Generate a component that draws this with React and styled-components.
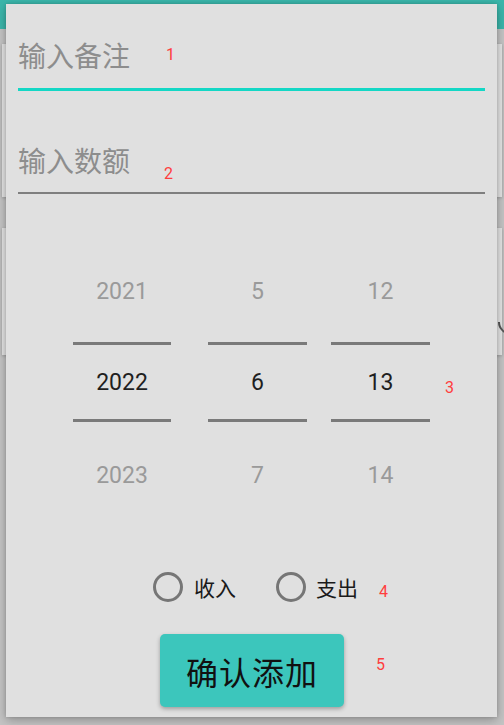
import React from 'react';
import styled, { createGlobalStyle } from 'styled-components';

const GlobalStyle = createGlobalStyle`
  html, body {
    margin: 0;
    padding: 0;
  }
  body {
    width: 504px;
    height: 725px;
    overflow: hidden;
    background: #c4c4c4;
    font-family: Roboto, "Noto Sans CJK SC", sans-serif;
  }
`;

const CJK = `"Noto Sans CJK SC", "Noto Sans", sans-serif`;

const Screen = styled.div`
  position: relative;
  width: 504px;
  height: 725px;
  background: #c4c4c4;
  overflow: hidden;
`;

const AppBar = styled.div`
  height: 29px;
  background: #3bb6ab;
`;

const CardList = styled.div`
  display: flex;
  flex-direction: column;
  gap: 31px;
  padding: 15px 2px 0;
`;

const Card = styled.div`
  height: ${p => p.h}px;
  background: #e5e5e5;
  box-shadow: 0 1px 3px rgba(0, 0, 0, 0.2);
  display: flex;
  justify-content: flex-end;
  align-items: flex-start;
`;

// radio of the list row behind the dialog, only its lower-left arc peeks out
const PeekRadio = styled.div`
  width: 26px;
  height: 26px;
  box-sizing: border-box;
  margin: 81px -22px 0 0;
  border: 2px solid transparent;
  border-left-color: #555;
  border-bottom-color: #555;
  border-radius: 50%;
  transform: rotate(-45deg);
`;

const Dialog = styled.div`
  position: absolute;
  left: 6px;
  top: 4px;
  width: 491px;
  height: 713px;
  box-sizing: border-box;
  padding: 0 12px;
  background: #e0e0e0;
  box-shadow: 0 3px 10px rgba(0, 0, 0, 0.28), 0 0 3px rgba(0, 0, 0, 0.15);
  display: flex;
  flex-direction: column;
`;

const Field = styled.div`
  display: flex;
  align-items: center;
  height: 34px;
  margin-top: ${p => p.top}px;
  padding-bottom: ${p => (p.focused ? 16 : 15)}px;
  border-bottom: ${p => (p.focused ? '3px solid #14d7c5' : '2px solid #7f7f7f')};
`;

const Hint = styled.span`
  font-family: ${CJK};
  font-size: 28px;
  line-height: 34px;
  color: #8d8d8d;
`;

const Marker = styled.span`
  font-family: Roboto, sans-serif;
  font-size: 16px;
  line-height: 16px;
  color: #ff3d3d;
  margin-left: ${p => p.left}px;
  margin-top: ${p => p.dy || 0}px;
  margin-bottom: ${p => p.up || 0}px;
  align-self: ${p => p.self || 'auto'};
`;

const PickerRow = styled.div`
  display: flex;
  margin-top: 46px;
  padding-left: 55px;
`;

const Column = styled.div`
  display: flex;
  flex-direction: column;
  width: ${p => p.w}px;
  margin-left: ${p => p.left || 0}px;
`;

const Cell = styled.div`
  height: ${p => p.h}px;
  display: flex;
  align-items: center;
  justify-content: center;
  font-family: Roboto, sans-serif;
  font-size: 23px;
  color: #9a9a9a;
`;

const SelectedCell = styled(Cell)`
  height: 74px;
  color: #1f1f1f;
  border-top: 3px solid #7a7a7a;
  border-bottom: 3px solid #7a7a7a;
`;

const RadioRow = styled.div`
  display: flex;
  align-items: center;
  height: 36px;
  margin-top: 41px;
  padding-left: 135px;
`;

const RadioItem = styled.label`
  display: flex;
  align-items: center;
  margin-left: ${p => p.left || 0}px;
`;

const RadioCircle = styled.span`
  width: 30px;
  height: 30px;
  box-sizing: border-box;
  border: 3px solid #767676;
  border-radius: 50%;
`;

const RadioLabel = styled.span`
  margin-left: ${p => p.gap}px;
  font-family: ${CJK};
  font-size: 21px;
  line-height: 30px;
  color: #1a1a1a;
`;

const ButtonRow = styled.div`
  display: flex;
  align-items: center;
  margin-top: 29px;
  padding-left: 142px;
`;

const ConfirmButton = styled.button`
  width: 184px;
  height: 73px;
  border: none;
  border-radius: 5px;
  background: #3cc6bc;
  box-shadow: 0 2px 4px rgba(0, 0, 0, 0.3);
  font-family: ${CJK};
  font-size: 32px;
  letter-spacing: 1px;
  color: #111;
  padding: 0;
`;

const columns = [
  { w: 98, left: 0, values: ['2021', '2022', '2023'] },
  { w: 99, left: 37, values: ['5', '6', '7'] },
  { w: 99, left: 24, values: ['12', '13', '14'] },
];

export default function App() {
  return (
    <Screen>
      <GlobalStyle />
      <AppBar />
      <CardList>
        <Card h={153} />
        <Card h={127}>
          <PeekRadio />
        </Card>
      </CardList>

      <Dialog>
        <Field top={34} focused>
          <Hint>输入备注</Hint>
          <Marker left={36}>1</Marker>
        </Field>
        <Field top={52}>
          <Hint>输入数额</Hint>
          <Marker left={34} dy={27}>2</Marker>
        </Field>

        <PickerRow>
          {columns.map(col => (
            <Column key={col.values[1]} w={col.w} left={col.left}>
              <Cell h={102}>{col.values[0]}</Cell>
              <SelectedCell>{col.values[1]}</SelectedCell>
              <Cell h={106}>{col.values[2]}</Cell>
            </Column>
          ))}
          <Marker left={15} dy={140} self="flex-start">3</Marker>
        </PickerRow>

        <RadioRow>
          <RadioItem>
            <RadioCircle />
            <RadioLabel gap={11}>收入</RadioLabel>
          </RadioItem>
          <RadioItem left={40}>
            <RadioCircle />
            <RadioLabel gap={10}>支出</RadioLabel>
          </RadioItem>
          <Marker left={21} dy={9}>4</Marker>
        </RadioRow>

        <ButtonRow>
          <ConfirmButton>确认添加</ConfirmButton>
          <Marker left={32} up={11}>5</Marker>
        </ButtonRow>
      </Dialog>
    </Screen>
  );
}
